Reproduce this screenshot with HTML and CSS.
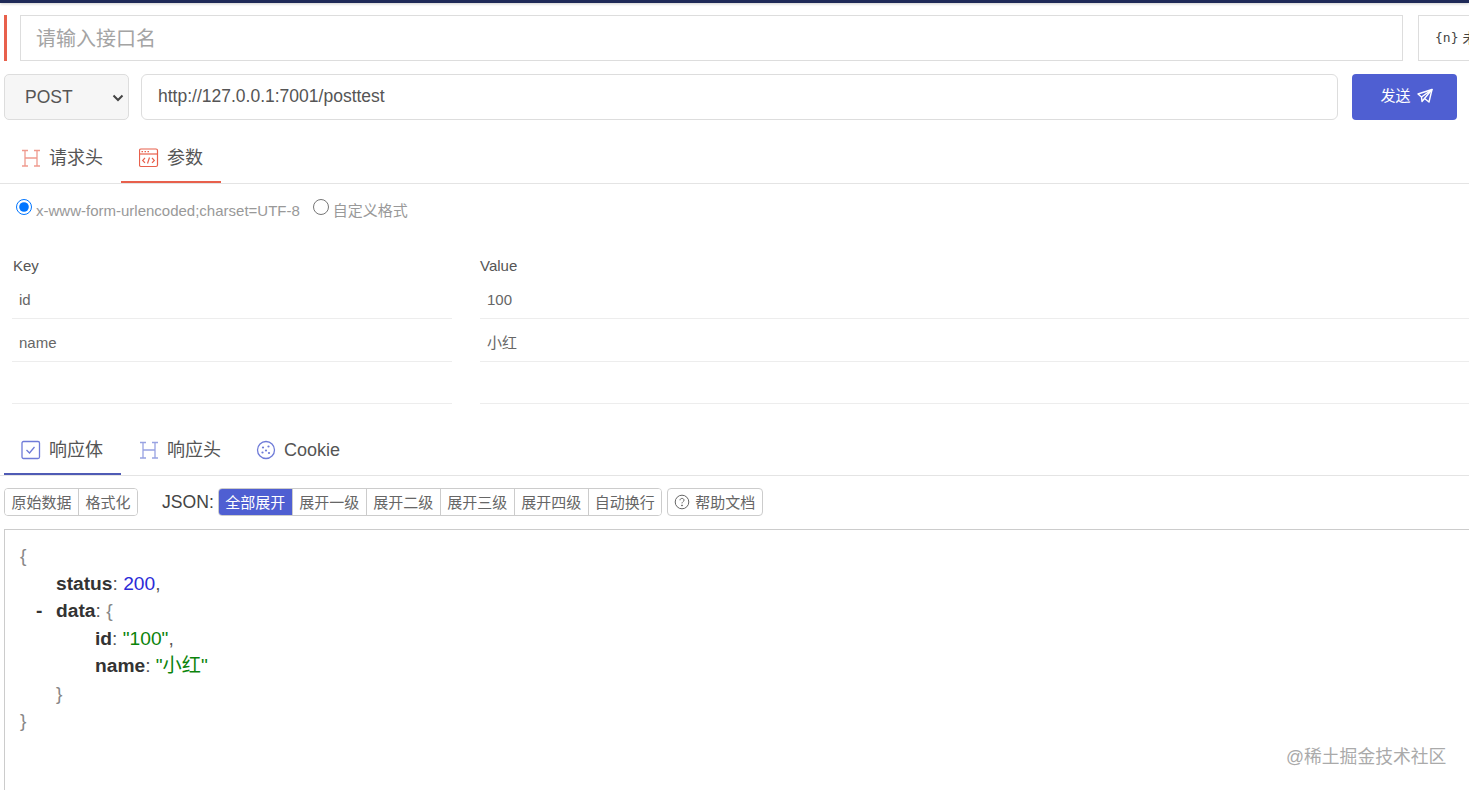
FILE: index.html
```html
<!DOCTYPE html>
<html lang="zh-CN">
<head>
<meta charset="utf-8">
<title>接口调试</title>
<link rel="stylesheet" href="styles.css">
</head>
<body>
<div class="topbar"></div>
<main class="page">
  <section class="name-row">
    <span class="name-mark"></span>
    <input class="name-input" type="text" placeholder="请输入接口名">
    <div class="env-box"><span class="env-code">{n}</span> 未</div>
  </section>

  <section class="url-row">
    <select class="method"><option>POST</option></select>
    <input class="url-input" type="text" value="http://127.0.0.1:7001/posttest">
    <button class="send" type="button"><span class="send-label">发送</span>
      <svg class="send-icon" viewBox="0 0 16 16" width="16" height="16" fill="none" stroke="#fff" stroke-width="1.4" stroke-linejoin="round"><path d="M1 6 L15 1.5 L12 14 L7.500 10.500 L5 13.500 L4.500 9 Z"/><path d="M4.500 9 L15 1.500 L7.500 10.500"/></svg>
    </button>
  </section>

  <nav class="tabs tabs-req">
    <div class="tab tab-first">
      <svg class="tab-icon" viewBox="0 0 20 20" width="20" height="20" fill="none" stroke="#ef9a8e" stroke-width="1.3"><path d="M1 2.5h6M13 2.500h6M1 18h6M13 18h6M4 2.500v15.500M16 2.500v15.500M4 10h12"/></svg>
      <span class="tab-label">请求头</span>
    </div>
    <div class="tab tab-active-red tab-narrow">
      <svg class="tab-icon" viewBox="0 0 20 20" width="20" height="20" fill="none" stroke="#e8604c" stroke-width="1.2"><rect x="0.5" y="1" width="18" height="17.5" rx="1.5"/><path d="M0.5 6h18"/><path d="M2.5 3.6h1.5M5.5 3.6h1.5M8.5 3.6h1.5"/><path d="M6 10l-2.3 2.4 2.3 2.4M13 10l2.3 2.4-2.3 2.4M10.5 9.5l-2 6"/></svg>
      <span class="tab-label">参数</span>
    </div>
  </nav>

  <section class="radios">
    <label class="radio"><input type="radio" name="fmt" checked><span>x-www-form-urlencoded;charset=UTF-8</span></label>
    <label class="radio"><input type="radio" name="fmt"><span>自定义格式</span></label>
  </section>

  <section class="kv">
    <div class="kv-head kv-key">Key</div>
    <div class="kv-head">Value</div>
    <div class="kv-cell">id</div>
    <div class="kv-cell">100</div>
    <div class="kv-cell">name</div>
    <div class="kv-cell">小红</div>
    <div class="kv-cell"></div>
    <div class="kv-cell"></div>
  </section>

  <nav class="tabs tabs-res">
    <div class="tab tab-first tab-active-blue">
      <svg class="tab-icon" viewBox="0 0 20 20" width="20" height="20" fill="none" stroke="#6f7bd8" stroke-width="1.3"><rect x="1" y="1.5" width="17.5" height="17" rx="1.5"/><path d="M5.5 10l3 3 5-6"/></svg>
      <span class="tab-label">响应体</span>
    </div>
    <div class="tab">
      <svg class="tab-icon" viewBox="0 0 20 20" width="20" height="20" fill="none" stroke="#98a2e2" stroke-width="1.3"><path d="M1 2.500h6M13 2.500h6M1 18h6M13 18h6M4 2.500v15.500M16 2.500v15.500M4 10h12"/></svg>
      <span class="tab-label">响应头</span>
    </div>
    <div class="tab tab-cookie">
      <svg class="tab-icon" viewBox="0 0 20 20" width="20" height="20" fill="none" stroke="#6f7bd8" stroke-width="1.3"><circle cx="10" cy="10" r="8.5"/><g fill="#6f7bd8" stroke="none"><circle cx="7" cy="7.5" r="1.1"/><circle cx="12.5" cy="6.5" r="1.1"/><circle cx="10" cy="10.5" r="1.1"/><circle cx="6.5" cy="12.5" r="1.1"/><circle cx="13" cy="13" r="1.1"/></g></svg>
      <span class="tab-label">Cookie</span>
    </div>
  </nav>

  <section class="toolbar">
    <div class="btn-group">
      <button class="tbtn tbtn-raw" type="button">原始数据</button>
      <button class="tbtn tbtn-fmt" type="button">格式化</button>
    </div>
    <span class="json-label">JSON:</span>
    <div class="btn-group">
      <button class="tbtn tbtn-on" type="button">全部展开</button>
      <button class="tbtn" type="button">展开一级</button>
      <button class="tbtn" type="button">展开二级</button>
      <button class="tbtn" type="button">展开三级</button>
      <button class="tbtn" type="button">展开四级</button>
      <button class="tbtn tbtn-end" type="button">自动换行</button>
    </div>
    <button class="help" type="button">
      <svg viewBox="0 0 16 16" width="16" height="16" fill="none" stroke="#666" stroke-width="1"><circle cx="8" cy="8" r="6.8"/><path d="M6 6.3C6 5 7 4.4 8 4.4s2 .7 2 1.8c0 1.4-2 1.6-2 3.2"/><circle cx="8" cy="11.4" r=".5" fill="#666"/></svg>
      <span>帮助文档</span>
    </button>
  </section>

  <section class="json">
    <div class="jl brace">{</div>
    <div class="jl d1"><b>status</b>: <span class="num">200</span>,</div>
    <div class="jl d1 fold"><i class="minus">-</i><b>data</b>: <span class="brace">{</span></div>
    <div class="jl d2"><b>id</b>: <span class="str">"100"</span>,</div>
    <div class="jl d2"><b>name</b>: <span class="str">"小红"</span></div>
    <div class="jl d1 brace">}</div>
    <div class="jl brace">}</div>
  </section>
</main>
<div class="watermark">@稀土掘金技术社区</div>
</body>
</html>
```

FILE: styles.css
```css
* { box-sizing: border-box; }
html, body { margin: 0; height: 100%; overflow: hidden; background: #fff; }
body {
  font-family: "Liberation Sans", "Noto Sans CJK SC", sans-serif;
  color: #555;
  position: relative;
}
.topbar {
  height: 3px;
  background: #1f2a58;
  box-shadow: 0 1px 3px rgba(0,0,0,.2);
}
.page { padding: 12px 0 0 4px; width: 1469px; height: 787px; overflow: hidden; }

.name-row { display: flex; height: 46px; width: 1560px; }
.name-mark { width: 3px; background: #e8604c; margin-right: 13px; flex: none; }
.name-input {
  width: 1383px;
  flex: none;
  border: 1px solid #ddd;
  padding: 1px 15px 0;
  font: 20px/28px "Liberation Sans", "Noto Sans CJK SC", sans-serif;
  color: #555;
  outline: none;
}
.name-input::placeholder { color: #a4a4a4; }
.env-box {
  margin-left: 15px;
  width: 140px;
  flex: none;
  border: 1px solid #ddd;
  padding-left: 16px;
  display: flex;
  align-items: center;
  gap: 4px;
  font-size: 14px;
  line-height: 20px;
  color: #444;
  white-space: nowrap;
}
.env-code { font-family: "DejaVu Sans Mono", monospace; font-size: 13px; }

.url-row { display: flex; height: 46px; margin-top: 13px; }
.method {
  appearance: none;
  width: 125px;
  border: 1px solid #ddd;
  border-radius: 5px;
  background: #f6f6f6 url("data:image/svg+xml,%3Csvg xmlns='http://www.w3.org/2000/svg' width='12' height='8' viewBox='0 0 12 8'%3E%3Cpath d='M1.5 1.5L6 6l4.500-4.500' fill='none' stroke='%23444' stroke-width='2'/%3E%3C/svg%3E") no-repeat 107px 19px;
  padding-left: 20px;
  font: 17.5px "Liberation Sans", sans-serif;
  color: #555;
  outline: none;
}
.url-input {
  width: 1197px;
  margin-left: 12px;
  border: 1px solid #ddd;
  border-radius: 6px;
  padding: 0 16px 2px;
  font: 17.5px "Liberation Sans", sans-serif;
  color: #555;
  outline: none;
}
.send {
  width: 105px;
  margin-left: 14px;
  border: 0;
  border-radius: 4px;
  background: #4f5fd2;
  color: #fff;
  font: 15px/20px "Noto Sans CJK SC", sans-serif;
  display: flex;
  align-items: center;
  justify-content: center;
  gap: 6px;
  padding: 0 0 2px 4px;
}
.send-label { margin-bottom: 2px; }
.send-icon { display: block; }

.tabs {
  display: flex;
  height: 49px;
  margin-left: -4px;
  padding-left: 4px;
  border-bottom: 1px solid #e4e4e4;
}
.tabs-req { margin-top: 15px; }
.tabs-res { margin-top: 23px; }
.tab {
  height: 48px;
  width: 117px;
  padding-left: 18px;
  display: flex;
  align-items: center;
  gap: 8px;
  font-size: 18px;
  line-height: 20px;
  color: #555;
  border-bottom: 2px solid transparent;
  white-space: nowrap;
}
.tab-first { padding-left: 17px; }
.tab-narrow { width: 100px; }
.tab-active-red { border-bottom-color: #e8604c; }
.tab-active-blue { border-bottom-color: #4f5bb5; }
.tab-cookie { width: 110px; }
.tab-icon { flex: none; }
.tab-label { margin-bottom: 0; }

.radios {
  display: flex;
  gap: 13px;
  height: 53px;
  padding: 15px 0 0 12px;
  font-size: 15px;
  line-height: 18px;
  color: #999;
}
.radio { display: flex; align-items: flex-start; gap: 4px; height: 22px; }
.radio input { margin: 0; width: 16px; height: 16px; flex: none; }
.radio span { margin-top: 3px; }

.kv {
  display: grid;
  grid-template-columns: 440px 1fr;
  column-gap: 28px;
  margin: 15px 0 0 8px;
  width: 1500px;
}
.kv-head { font-size: 15px; color: #555; height: 24.5px; line-height: 28px; }
.kv-key { padding-left: 1px; }
.kv-cell {
  height: 42.5px;
  border-bottom: 1px solid #ededed;
  padding: 10.5px 0 0 7px;
  font-size: 15px;
  line-height: 26px;
  color: #666;
}

.toolbar {
  display: flex;
  align-items: center;
  height: 28px;
  margin-top: 12px;
}
.btn-group { display: flex; border: 1px solid #ccc; border-radius: 4px; overflow: hidden; height: 28px; flex: none; }
.tbtn {
  border: 0;
  border-left: 1px solid #ccc;
  background: #fff;
  padding: 0;
  height: 26px;
  width: 74px;
  font: 15px/20px "Noto Sans CJK SC", sans-serif;
  color: #666;
}
.tbtn:first-child { border-left: 0; width: 73px; }
.tbtn-raw { width: 73px; }
.tbtn.tbtn-fmt { width: 59px; }
.tbtn.tbtn-end { width: 73px; }
.tbtn-on { background: #4f5fd2; color: #fff; }
.json-label { margin: 0 4px 0 24px; font-size: 17.6px; color: #444; }
.help {
  margin-left: 5px;
  width: 96px;
  height: 28px;
  border: 1px solid #ccc;
  border-radius: 4px;
  background: #fff;
  display: flex;
  align-items: center;
  justify-content: center;
  gap: 5px;
  padding: 0;
  font: 15px/20px "Noto Sans CJK SC", sans-serif;
  color: #666;
}

.json {
  margin-top: 13px;
  height: 262px;
  width: 1500px;
  border: 1px solid #ccc;
  border-bottom: 0;
  padding: 12px 0 0 15px;
  font-size: 19.2px;
  line-height: 27.5px;
  color: #555;
}
.jl { position: relative; white-space: nowrap; }
.jl b { color: #333; }
.d1 { padding-left: 36px; }
.d2 { padding-left: 75px; }
.fold .minus {
  position: absolute;
  left: 16px;
  font-style: normal;
  font-weight: bold;
  color: #333;
}
.brace { color: #888; }
.num { color: #2b2bd8; }
.str { color: #0b840b; }

.watermark {
  position: absolute;
  left: 1286px;
  top: 746px;
  font-size: 17.8px;
  line-height: 22px;
  color: #aaa;
  white-space: nowrap;
}
```
